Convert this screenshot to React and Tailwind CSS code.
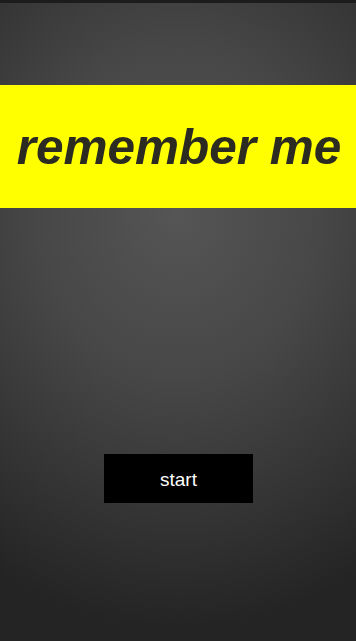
export default function App() {
  return (
    <div
      className="w-[356px] h-[641px] flex flex-col border-t-[3px] border-[#1c1c1c] bg-[radial-gradient(ellipse_100%_65%_at_50%_33%,#555555_0%,#474747_40%,#333333_75%,#242424_100%)]"
      style={{ fontFamily: '"Liberation Sans", Arial, sans-serif' }}
    >
      <div className="mt-[82px] h-[123px] bg-[#ffff00] flex items-center justify-center">
        <span className="text-[49.5px] font-bold italic text-[#2b2b22] leading-none ml-[2px]">
          remember me
        </span>
      </div>
      <div className="mt-[246px] flex justify-center">
        <button className="w-[149px] h-[49px] bg-black text-white text-[19px] ml-[1px] pt-[3px] flex items-center justify-center">
          start
        </button>
      </div>
    </div>
  );
}
